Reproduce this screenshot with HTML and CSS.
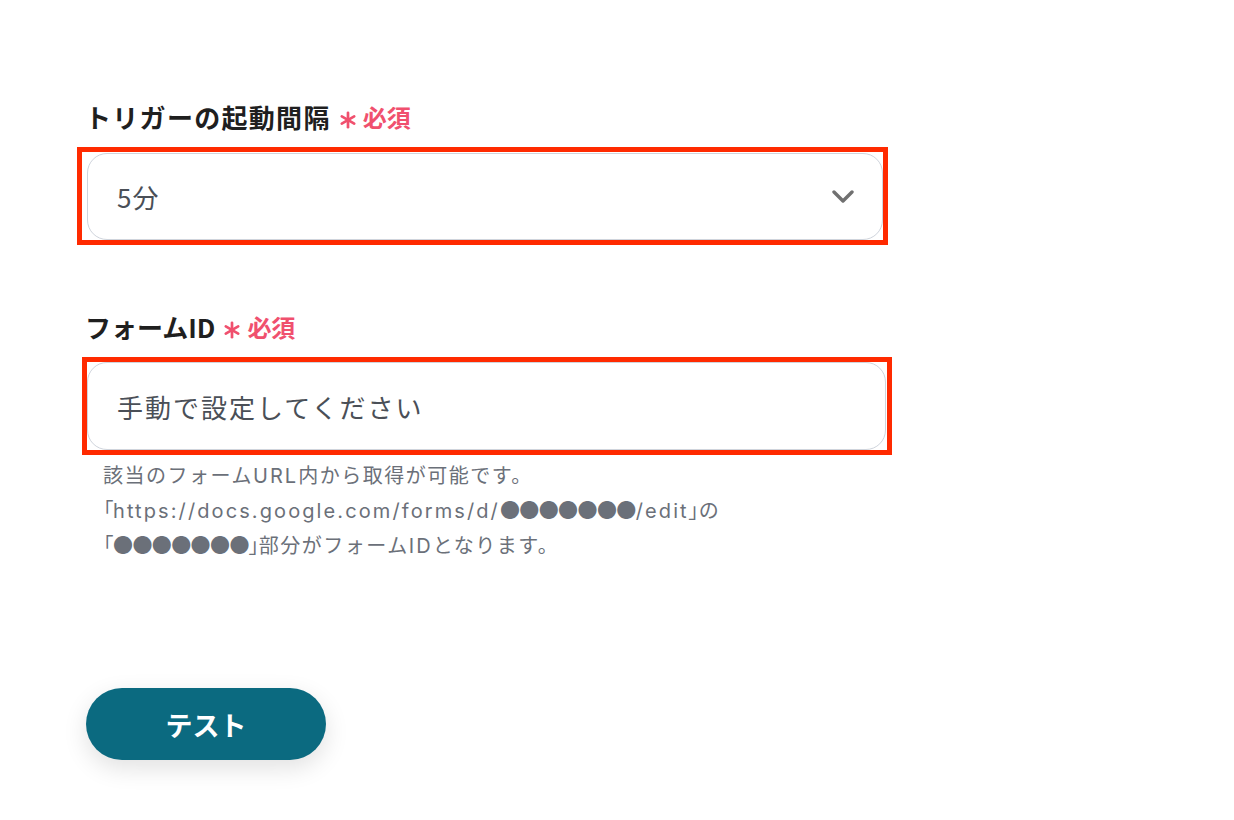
FILE: index.html
```html
<!DOCTYPE html>
<html lang="ja">
<head>
<meta charset="utf-8">
<title>フォーム設定</title>
<link rel="stylesheet" href="styles.css">
</head>
<body>
<main class="form">
  <div class="field-label">
    <span class="label-text label-text--wide">トリガーの起動間隔</span>
    <svg class="req-star" viewBox="0 0 20 20" aria-hidden="true"><g stroke="#f0506e" stroke-width="3" stroke-linecap="round"><line x1="10" y1="2" x2="10" y2="18"/><line x1="3.1" y1="6" x2="16.9" y2="14"/><line x1="3.1" y1="14" x2="16.9" y2="6"/></g></svg>
    <span class="req-text">必須</span>
  </div>
  <div class="highlight highlight--select">
    <div class="control control--select">
      <span class="control-value">5分</span>
      <svg class="chevron" viewBox="0 0 24 14" aria-hidden="true"><polyline points="3,2 12,11 21,2" fill="none" stroke="#707070" stroke-width="3.4" stroke-linecap="round" stroke-linejoin="round"/></svg>
    </div>
  </div>

  <div class="field-label field-label--second">
    <span class="label-text">フォームID</span>
    <svg class="req-star" viewBox="0 0 20 20" aria-hidden="true"><g stroke="#f0506e" stroke-width="3" stroke-linecap="round"><line x1="10" y1="2" x2="10" y2="18"/><line x1="3.1" y1="6" x2="16.9" y2="14"/><line x1="3.1" y1="14" x2="16.9" y2="6"/></g></svg>
    <span class="req-text">必須</span>
  </div>
  <div class="highlight highlight--input">
    <div class="control control--input">
      <span class="control-value control-value--spaced">手動で設定してください</span>
    </div>
  </div>
  <p class="help">該当のフォーム<span class="lat">URL</span>内から取得が可能です。<br><span class="br">「</span><span class="lat">https://docs.google.com/forms/d/</span><span class="dots">●●●●●●●</span><span class="lat">/edit</span><span class="br">」</span>の<br><span class="br">「</span><span class="dots">●●●●●●●</span><span class="br">」</span>部分がフォーム<span class="lat">ID</span>となります。</p>

  <button class="test-btn" type="button">テスト</button>
</main>
</body>
</html>
```

FILE: styles.css
```css
html, body {
  margin: 0;
  padding: 0;
  background: #ffffff;
}
body {
  min-height: 820px;
  font-family: "Noto Sans CJK JP", "Noto Sans", sans-serif;
  color: #222222;
}
.form {
  padding: 99px 0 60px 77px;
  width: 815px;
  display: flex;
  flex-direction: column;
  align-items: flex-start;
}
.field-label {
  display: flex;
  align-items: center;
  height: 36px;
  margin-left: 8px;
}
.field-label--second {
  margin-top: 64px;
}
.label-text {
  font-size: 26px;
  font-weight: 700;
  line-height: 36px;
  color: #1f1f1f;
}
.label-text--wide {
  letter-spacing: 1.3px;
}
.req-star {
  width: 18px;
  height: 18px;
  margin: 6px 6px 0 8px;
}
.req-text {
  font-size: 24px;
  font-weight: 700;
  color: #f0506e;
  line-height: 36px;
}
.highlight {
  border: 5px solid #ff2a00;
  box-sizing: border-box;
  margin-top: 12px;
}
.highlight--select {
  width: 811px;
  padding: 1px 0 0 5px;
}
.highlight--input {
  width: 810px;
  margin-left: 5px;
  padding: 0 1px 0 0;
}
.control {
  box-sizing: border-box;
  border: 1.5px solid #cfd4dc;
  border-radius: 20px;
  background: #ffffff;
  display: flex;
  align-items: center;
  padding-left: 29px;
}
.control--select {
  height: 87px;
  padding-right: 27px;
  justify-content: space-between;
}
.control--input {
  height: 88px;
}
.control-value {
  font-size: 26px;
  color: #4a4f57;
  letter-spacing: 1px;
}
.control-value--spaced {
  letter-spacing: 2px;
}
.chevron {
  width: 24px;
  height: 14px;
}
.help {
  margin: 2px 0 0 26px;
  font-size: 20px;
  line-height: 35px;
  letter-spacing: 1.5px;
  color: #6b7079;
}
.br {
  font-feature-settings: "palt";
  letter-spacing: 0;
}
.lat {
  font-family: Inter, "Noto Sans", sans-serif;
  font-size: 20px;
  letter-spacing: 2.1px;
  line-height: 1;
}
.dots {
  font-size: 20px;
  letter-spacing: -0.6px;
  line-height: 1;
}
.test-btn {
  margin: 126px 0 0 9px;
  width: 240px;
  height: 72px;
  border: none;
  border-radius: 36px;
  background: #0b6a80;
  color: #ffffff;
  font-family: "Noto Sans CJK JP", sans-serif;
  font-size: 27px;
  font-weight: 700;
  box-shadow: 0 8px 24px rgba(0, 0, 0, 0.12);
  cursor: pointer;
}
```
